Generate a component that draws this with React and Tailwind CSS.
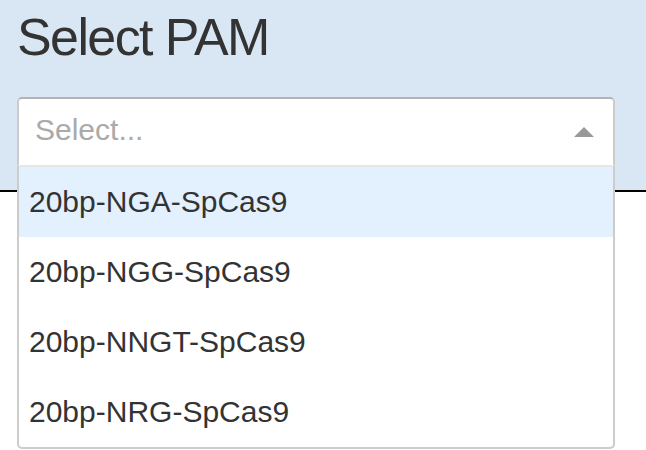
const OPTIONS = ['20bp-NGA-SpCas9', '20bp-NGG-SpCas9', '20bp-NNGT-SpCas9', '20bp-NRG-SpCas9'];

function PamSelect() {
  return (
    <div className="relative">
      <div className="h-[70px] flex items-center justify-between bg-white border-2 border-[#ccc] border-t-[#b3b3b3] rounded-t-[5px] pl-[16px] pr-[19px] pb-[5px]">
        <span className="text-[30px] leading-none text-[#aaa]">Select...</span>
        <span className="w-0 h-0 border-x-[10px] border-x-transparent border-b-[10px] border-b-[#999] mt-[5px]" />
      </div>
      <div className="absolute left-0 right-0 top-full -mt-[2px] bg-white border-2 border-[#ccc] border-t-[#e6e6e6] rounded-b-[5px] z-10">
        {OPTIONS.map((opt, i) => (
          <div
            key={opt}
            className={`h-[70px] flex items-center pl-[10px] text-[30px] leading-none text-[#333] ${i === 0 ? 'bg-[#e3f0fd]' : ''}`}
          >
            {opt}
          </div>
        ))}
      </div>
    </div>
  );
}

export default function App() {
  return (
    <div className="w-[646px] h-[450px] overflow-hidden bg-white" style={{ fontFamily: '"Liberation Sans", Arial, sans-serif' }}>
      <div className="h-[192px] bg-[#d9e7f4] border-b-2 border-black px-[17px] pt-[11px] pr-[31px]">
        <h1 className="text-[52px] leading-none tracking-[-1.6px] text-[#333] h-[52px]">Select PAM</h1>
        <div className="mt-[34px]">
          <PamSelect />
        </div>
      </div>
    </div>
  );
}
